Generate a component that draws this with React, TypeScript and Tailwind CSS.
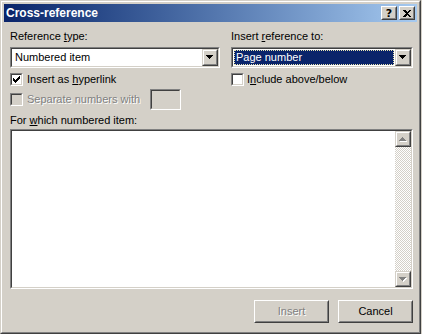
import React from "react";

const sunkenOuter = "border border-t-[#808080] border-l-[#808080] border-r-white border-b-white";
const sunkenInner = "border border-t-[#404040] border-l-[#404040] border-r-[#d4d0c8] border-b-[#d4d0c8]";
const raisedOuter = "border border-t-[#d4d0c8] border-l-[#d4d0c8] border-r-[#404040] border-b-[#404040]";
const raisedInner = "border border-t-white border-l-white border-r-[#808080] border-b-[#808080]";
const buttonOuter = "border border-t-white border-l-white border-r-[#404040] border-b-[#404040]";
const buttonInner = "border border-t-[#d4d0c8] border-l-[#d4d0c8] border-r-[#808080] border-b-[#808080]";

const Arrow = ({ up = false, disabled = false }: { up?: boolean; disabled?: boolean }) => (
  <svg width="8" height="5" viewBox="0 0 8 5" shapeRendering="crispEdges" className="overflow-visible">
    {disabled && (
      <polygon
        points={up ? "1,5 8,5 4.5,1" : "1,1 8,1 4.5,5"}
        fill="#ffffff"
      />
    )}
    <polygon points={up ? "0,4 7,4 3.5,0" : "0,0 7,0 3.5,4"} fill={disabled ? "#808080" : "#000000"} />
  </svg>
);

const DropButton = ({ up = false, disabled = false, className = "" }: { up?: boolean; disabled?: boolean; className?: string }) => (
  <div className={`w-[16px] ${raisedOuter} ${className}`}>
    <div className={`h-full flex items-center justify-center bg-[#d4d0c8] ${raisedInner}`}>
      <Arrow up={up} disabled={disabled} />
    </div>
  </div>
);

const Combo = ({ children }: { children: React.ReactNode }) => (
  <div className={`h-[21px] ${sunkenOuter}`}>
    <div className={`h-full flex bg-white ${sunkenInner}`}>
      <div className="flex-1 flex p-[1px] min-w-0">{children}</div>
      <DropButton className="h-full" />
    </div>
  </div>
);

const Checkbox = ({ checked = false, disabled = false }: { checked?: boolean; disabled?: boolean }) => (
  <div className={`w-[13px] h-[13px] shrink-0 ${sunkenOuter}`}>
    <div className={`w-full h-full flex items-center justify-center ${disabled ? "bg-[#d4d0c8]" : "bg-white"} ${sunkenInner}`}>
      {checked && (
        <svg width="7" height="7" viewBox="0 0 7 7" shapeRendering="crispEdges">
          <path d="M6 0h1v3h-1v1h-1v1h-1v1h-1v1h-1v-1h-1v-1h-1v-3h1v1h1v1h1v-1h1v-1h1z" fill="#000" />
        </svg>
      )}
    </div>
  </div>
);

const PushButton = ({ label, disabled = false }: { label: string; disabled?: boolean }) => (
  <div className={`w-[75px] h-[23px] ${buttonOuter}`}>
    <div
      className={`h-full flex items-center justify-center bg-[#d4d0c8] ${buttonInner} ${
        disabled ? "text-[#808080] [text-shadow:1px_1px_0_#ffffff]" : "text-black"
      }`}
    >
      {label}
    </div>
  </div>
);

const CaptionButton = ({ children }: { children: React.ReactNode }) => (
  <div className={`w-[16px] h-[14px] ${buttonOuter}`}>
    <div className={`h-full flex items-center justify-center bg-[#d4d0c8] ${buttonInner}`}>{children}</div>
  </div>
);

export default function App() {
  return (
    <div className="w-[422px] h-[334px] bg-[#d4d0c8] font-['Liberation_Sans',Arial,sans-serif] text-[11px] leading-[13px] text-black">
      <div className="w-[421px] h-[334px] border border-t-[#d4d0c8] border-l-[#d4d0c8] border-r-[#404040] border-b-[#404040]">
        <div className="h-full flex flex-col p-[2px] border border-t-white border-l-white border-r-[#808080] border-b-[#808080]">
          {/* title bar */}
          <div className="h-[18px] shrink-0 flex items-center pl-[2px] pr-[2px] bg-linear-to-r from-[#0a246a] to-[#a6caf0]">
            <span className="flex-1 text-white font-bold text-[12px] leading-[14px]">Cross-reference</span>
            <div className="flex gap-[2px]">
              <CaptionButton>
                <span className="font-bold text-[11px] leading-[11px] font-['DejaVu_Sans',sans-serif]">?</span>
              </CaptionButton>
              <CaptionButton>
                <svg width="8" height="7" viewBox="0 0 8 7" shapeRendering="crispEdges">
                  <path d="M0 0h2l2 2 2-2h2l-3 3.5 3 3.5h-2l-2-2-2 2h-2l3-3.5z" fill="#000" />
                </svg>
              </CaptionButton>
            </div>
          </div>

          {/* body */}
          <div className="flex-1 flex flex-col pl-[6px] pr-[4px]">
            <div className="grid grid-cols-[210px_182px] gap-x-[11px] mt-[8px]">
              <div className="h-[13px]">
                Reference <span className="underline">t</span>ype:
              </div>
              <div className="h-[13px]">
                Insert <span className="underline">r</span>eference to:
              </div>

              <div className="mt-[4px]">
                <Combo>
                  <div className="flex-1 flex items-center pl-[2px]">Numbered item</div>
                </Combo>
              </div>
              <div className="mt-[4px]">
                <Combo>
                  <div className="flex-1 flex items-center pl-[1px] bg-[#0a246a] text-white border border-dotted border-[#e8e4b0]">
                    Page number
                  </div>
                </Combo>
              </div>

              <div className="mt-[5px] flex items-center gap-[4px]">
                <Checkbox checked />
                <span>
                  Insert as <span className="underline">h</span>yperlink
                </span>
              </div>
              <div className="mt-[5px] flex items-center gap-[3px]">
                <Checkbox />
                <span>
                  I<span className="underline">n</span>clude above/below
                </span>
              </div>
            </div>

            <div className="mt-[3px] h-[21px] flex items-center">
              <Checkbox disabled />
              <span className="ml-[4px] w-[123px] text-[#808080] [text-shadow:1px_1px_0_#ffffff]">
                Separate numbers with
              </span>
              <div className={`w-[31px] h-[21px] ${sunkenOuter}`}>
                <div className={`h-full bg-[#d4d0c8] ${sunkenInner}`} />
              </div>
            </div>

            <div className="mt-[4px] h-[13px]">
              For <span className="underline">w</span>hich numbered item:
            </div>

            <div className={`mt-[2px] h-[160px] ${sunkenOuter}`}>
              <div className={`h-full flex bg-white ${sunkenInner}`}>
                <div className="flex-1" />
                <div className="w-[16px] flex flex-col">
                  <DropButton up disabled className="h-[16px]" />
                  <div className="flex-1 bg-[image:repeating-conic-gradient(#ffffff_0_25%,#d4d0c8_0_50%)] bg-[length:2px_2px]" />
                  <DropButton disabled className="h-[16px]" />
                </div>
              </div>
            </div>

            <div className="mt-[11px] flex justify-end gap-[9px]">
              <PushButton label="Insert" disabled />
              <PushButton label="Cancel" />
            </div>
          </div>
        </div>
      </div>
    </div>
  );
}
